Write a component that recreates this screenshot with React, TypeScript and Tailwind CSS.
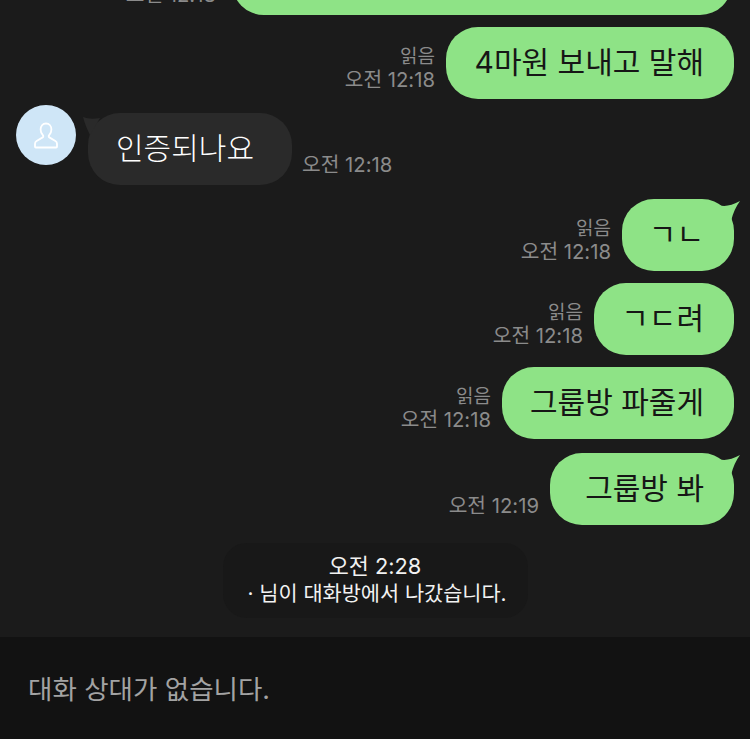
const FONT = "font-['Inter','Noto_Sans_CJK_KR',sans-serif]";

type MineProps = {
  text: string;
  read?: boolean;
  time: string;
  tail?: boolean;
  width: string;
  className?: string;
};

const Mine = ({ text, read = true, time, tail, width, className = "" }: MineProps) => {
  return (
    <div className={`flex items-end justify-end pr-4 ${className}`}>
      <div className="mr-[11px] mb-[8px] flex flex-col items-end text-[20.3px] leading-[23px] text-[#8b8b8b]">
        {read && <span className="text-[19px]">읽음</span>}
        <span>{time}</span>
      </div>
      <div className={`relative flex h-[72px] items-center justify-end rounded-[32px] bg-[#8ee386] pr-[30px] text-[30px] text-[#161616] ${width}`}>
        <span className="-mt-[2px] whitespace-pre">{text}</span>
        {tail && (
          <svg
            className="absolute -right-[7px] top-0"
            width="24"
            height="24"
            viewBox="0 0 24 24"
          >
            <path d="M2 6 Q10 9 23 2 Q17 10 14 22 Z" fill="#8ee386" />
          </svg>
        )}
      </div>
    </div>
  );
};

const PersonIcon = () => (
  <svg width="24" height="27" viewBox="0 0 24 27" fill="none" stroke="#ffffff" strokeWidth="1.8">
    <path
      d="M12 1.5c-3.4 0-5.4 2.7-5.4 6 0 2.6 1.1 4.6 2.4 5.9.5.6.4 1.6-.3 2L2.6 19c-1 .6-1.6 1.6-1.6 2.8v2.9c0 .5.4.8.8.8h20.4c.4 0 .8-.3.8-.8v-2.9c0-1.2-.6-2.2-1.6-2.8l-6.1-3.6c-.7-.4-.8-1.4-.3-2 1.3-1.3 2.4-3.3 2.4-5.9 0-3.3-2-6-5.4-6z"
      strokeLinejoin="round"
    />
  </svg>
);

export default function App() {
  return (
    <div className={`flex h-[739px] w-[750px] flex-col overflow-hidden bg-[#1b1b1b] ${FONT}`}>
      <div className="flex h-[637px] flex-col justify-end overflow-hidden">
        {/* bubble cut off by the scroll area */}
        <div className="flex items-end justify-end pr-[18px]">
          <div className="mr-[16px] mb-[8px] text-[20.3px] leading-[24px] text-[#8b8b8b]">오전 12:18</div>
          <div className="h-[72px] w-[500px] rounded-[32px] bg-[#8ee386]" />
        </div>

        <Mine className="mt-3" width="w-[288px]" text="4마원 보내고 말해" time="오전 12:18" />

        <div className="mt-[6px] flex items-end pl-4">
          <div className="mb-[20px] flex h-[60px] w-[60px] items-center justify-center rounded-full bg-[#cfe6f7]">
            <PersonIcon />
          </div>
          <div className="relative ml-3 flex h-[72px] w-[204px] items-center rounded-[32px] bg-[#2a2a2a] pl-7 text-[30px] font-light text-white">
            <span className="-mt-[2px]">인증되나요</span>
            <svg className="absolute -left-[6px] top-0" width="24" height="24" viewBox="0 0 24 24">
              <path d="M1 4 Q8 7 18 5 L8 22 Q3 12 1 4 Z" fill="#2a2a2a" />
            </svg>
          </div>
          <div className="mb-[8px] ml-[10px] text-[20.3px] leading-[24px] text-[#8b8b8b]">오전 12:18</div>
        </div>

        <Mine className="mt-[14px]" width="w-[112px]" text="ㄱㄴ" time="오전 12:18" tail />
        <Mine className="mt-3" width="w-[140px]" text="ㄱㄷ려" time="오전 12:18" />
        <Mine className="mt-3" width="w-[232px]" text="그룹방 파줄게" time="오전 12:18" />
        <Mine className="mt-[14px]" width="w-[184px]" text="그룹방 봐" time="오전 12:19" read={false} tail />

        <div className="mb-[19px] mt-[18px] flex justify-center">
          <div className="flex h-[75px] w-[305px] flex-col items-center justify-center rounded-[24px] bg-[#181818] pb-[2px] pl-1 text-[20.8px] leading-[27px] text-[#f2f2f2]">
            <span className="mr-1 text-[21.8px]">오전 2:28</span>
            <span>· 님이 대화방에서 나갔습니다.</span>
          </div>
        </div>
      </div>

      <div className="flex h-[102px] items-start bg-[#121212] pl-7 pt-[32px] text-[26.5px] leading-[40px] text-[#a3a3a3]">
        대화 상대가 없습니다.
      </div>
    </div>
  );
}
